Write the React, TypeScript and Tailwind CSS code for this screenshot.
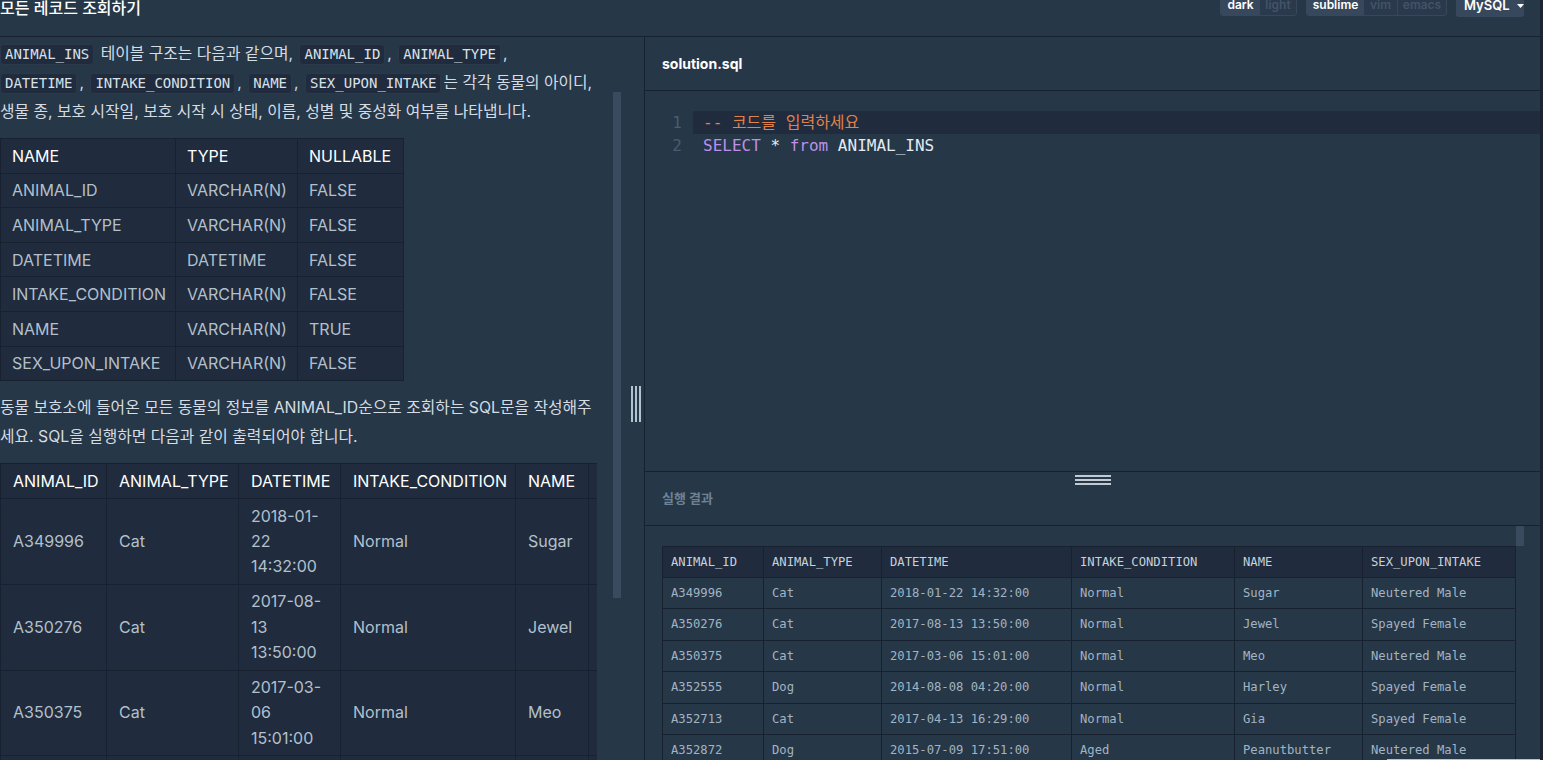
import React from "react";

const sans = "font-[Inter,'Noto_Sans_CJK_KR',sans-serif]";
const monoCls = "font-['DejaVu_Sans_Mono','Noto_Sans_CJK_KR',monospace]";

function Code({ children, first }: { children: React.ReactNode; first?: boolean }) {
  return (
    <code
      className={`${first ? "mr-[2px]" : "mx-[2px]"} inline-block h-[21px] rounded-[4px] border border-[#2b394b] bg-[#202b3d] px-[4px] align-middle text-[14px] leading-[19px] text-[#d9e1e8] font-['DejaVu_Sans_Mono',monospace]`}
    >
      {children}
    </code>
  );
}

const schema = [
  ["NAME", "TYPE", "NULLABLE"],
  ["ANIMAL_ID", "VARCHAR(N)", "FALSE"],
  ["ANIMAL_TYPE", "VARCHAR(N)", "FALSE"],
  ["DATETIME", "DATETIME", "FALSE"],
  ["INTAKE_CONDITION", "VARCHAR(N)", "FALSE"],
  ["NAME", "VARCHAR(N)", "TRUE"],
  ["SEX_UPON_INTAKE", "VARCHAR(N)", "FALSE"],
];
const schemaW = ["w-[175px]", "w-[122px]", "w-[106px]"];

const sampleHead = ["ANIMAL_ID", "ANIMAL_TYPE", "DATETIME", "INTAKE_CONDITION", "NAME", "SEX_UPON_INTAKE"];
const sampleRows = [
  ["A349996", "Cat", ["2018-01-", "22", "14:32:00"], "Normal", "Sugar", "Neutered Male"],
  ["A350276", "Cat", ["2017-08-", "13", "13:50:00"], "Normal", "Jewel", "Spayed Female"],
  ["A350375", "Cat", ["2017-03-", "06", "15:01:00"], "Normal", "Meo", "Neutered Male"],
  ["A352555", "Dog", ["2014-08-", "08", "04:20:00"], "Normal", "Harley", "Spayed Female"],
] as const;
const sampleW = ["w-[106px]", "w-[132px]", "w-[102px]", "w-[175px]", "w-[73px]", "w-[170px]"];

const results = [
  ["A349996", "Cat", "2018-01-22 14:32:00", "Normal", "Sugar", "Neutered Male"],
  ["A350276", "Cat", "2017-08-13 13:50:00", "Normal", "Jewel", "Spayed Female"],
  ["A350375", "Cat", "2017-03-06 15:01:00", "Normal", "Meo", "Neutered Male"],
  ["A352555", "Dog", "2014-08-08 04:20:00", "Normal", "Harley", "Spayed Female"],
  ["A352713", "Cat", "2017-04-13 16:29:00", "Normal", "Gia", "Spayed Female"],
  ["A352872", "Dog", "2015-07-09 17:51:00", "Aged", "Peanutbutter", "Neutered Male"],
  ["A353259", "Dog", "2016-05-08 12:57:00", "Injured", "Bj", "Neutered Male"],
];
const resW = ["w-[101px]", "w-[118px]", "w-[190px]", "w-[163px]", "w-[128px]", "w-[153px]"];

function Header() {
  return (
    <header className="flex h-[37px] shrink-0 items-start justify-between border-b border-[#172130]">
      <div className="text-[16px] font-medium leading-[17px] text-white">모든 레코드 조회하기</div>
      <div className="-mt-[6px] flex items-start gap-[9px] pr-[16px] text-[12px] font-semibold">
        <div className="flex h-[22px] overflow-hidden rounded-[3px] border border-[#38485c] bg-[#2a394b]">
          <span className="flex w-[39px] items-center justify-center bg-[#38485c] text-white">dark</span>
          <span className="flex w-[36px] items-center justify-center text-[#425468]">light</span>
        </div>
        <div className="flex h-[22px] overflow-hidden rounded-[3px] border border-[#38485c] bg-[#2a394b]">
          <span className="flex w-[57px] items-center justify-center bg-[#38485c] text-white">sublime</span>
          <span className="flex w-[33px] items-center justify-center text-[#425468]">vim</span>
          <span className="flex w-[49px] items-center justify-center border-l border-[#38485c] text-[#425468]">emacs</span>
        </div>
        <div className="flex h-[23px] w-[68px] items-center gap-[7px] rounded-[3px] bg-[#38485c] pl-[8px] text-[13px] text-white">
          <span>MySQL</span>
          <svg width="7" height="4" viewBox="0 0 7 4">
            <path d="M0 0 L7 0 L3.5 4 Z" fill="#ffffff" />
          </svg>
        </div>
      </div>
    </header>
  );
}

function LeftPane() {
  return (
    <div className="flex w-[645px] shrink-0 overflow-hidden border-r border-[#172130]">
      <div className="w-[597px] shrink-0 overflow-hidden">
        <div className="mt-[2px] text-[15.8px] leading-[29px] text-[#d5dce3]">
          <div className="whitespace-nowrap">
            <Code first>ANIMAL_INS</Code> 테이블 구조는 다음과 같으며, <Code>ANIMAL_ID</Code>, <Code>ANIMAL_TYPE</Code>,
          </div>
          <div className="whitespace-nowrap">
            <Code first>DATETIME</Code>, <Code>INTAKE_CONDITION</Code>, <Code>NAME</Code>, <Code>SEX_UPON_INTAKE</Code>는 각각 동물의 아이디,
          </div>
          <div className="whitespace-nowrap">생물 종, 보호 시작일, 보호 시작 시 상태, 이름, 성별 및 중성화 여부를 나타냅니다.</div>
        </div>

        <div className="mt-[12px] w-[404px] border-l border-t border-[#172130] bg-[#202b3d] text-[16px]">
          {schema.map((r, i) => (
            <div key={i} className="flex h-[34.6px]">
              {r.map((c, j) => (
                <div
                  key={j}
                  className={`${schemaW[j]} flex shrink-0 items-center border-b border-r border-[#172130] px-[11px] ${i === 0 ? "text-white" : "text-[#b2c0cc]"}`}
                >
                  {c}
                </div>
              ))}
            </div>
          ))}
        </div>

        <div className="mt-[12px] text-[15.8px] leading-[29px] text-[#d5dce3]">
          <div className="whitespace-nowrap">동물 보호소에 들어온 모든 동물의 정보를 ANIMAL_ID순으로 조회하는 SQL문을 작성해주</div>
          <div className="whitespace-nowrap">세요. SQL을 실행하면 다음과 같이 출력되어야 합니다.</div>
        </div>

        <div className="mt-[12px] w-[900px] border-l border-t border-[#172130] bg-[#202b3d] text-[16px]">
          <div className="flex h-[35px]">
            {sampleHead.map((c, j) => (
              <div key={j} className={`${sampleW[j]} flex shrink-0 items-center border-b border-r border-[#172130] px-[12px] text-white`}>
                {c}
              </div>
            ))}
          </div>
          {sampleRows.map((r, i) => (
            <div key={i} className="flex h-[85.7px]">
              {r.map((c, j) => (
                <div
                  key={j}
                  className={`${sampleW[j]} flex shrink-0 items-center border-b border-r border-[#172130] px-[12px] leading-[25.3px] text-[#b2c0cc]`}
                >
                  {Array.isArray(c) ? (
                    <div>
                      {c.map((l, k) => (
                        <div key={k}>{l}</div>
                      ))}
                    </div>
                  ) : (
                    c
                  )}
                </div>
              ))}
            </div>
          ))}
        </div>
      </div>
      <div className="ml-[16px] mt-[55px] h-[506px] w-[8px] shrink-0 bg-[#3a4a5f]" />
      <div className="ml-[10px] mt-[349px] flex h-[36px] shrink-0 gap-[2px]">
        <div className="h-full w-[2px] bg-[#b4c2cd]" />
        <div className="h-full w-[2px] bg-[#b4c2cd]" />
        <div className="h-full w-[2px] bg-[#b4c2cd]" />
      </div>
    </div>
  );
}

function RightPane() {
  return (
    <div className="flex min-w-0 flex-1 flex-col">
      <div className="flex h-[54px] shrink-0 items-center border-b border-[#172130] pl-[17px] text-[14px] font-bold text-white">
        solution.sql
      </div>
      <div className={`h-[381px] shrink-0 border-b border-[#172130] pt-[20px] text-[16px] leading-[23px] ${monoCls}`}>
        <div className="flex h-[23px]">
          <div className="w-[48px] shrink-0 pr-[11px] text-right text-[#4b5c70]">1</div>
          <div className="flex-1 whitespace-pre bg-[#202b3d] pl-[10px] text-[#e0824c]">-- 코드를 입력하세요</div>
        </div>
        <div className="flex h-[23px]">
          <div className="w-[48px] shrink-0 pr-[11px] text-right text-[#4b5c70]">2</div>
          <div className="flex-1 whitespace-pre pl-[10px] text-[#e3ebf2]">
            <span className="text-[#bb90ea]">SELECT</span> * <span className="text-[#bb90ea]">from</span> ANIMAL_INS
          </div>
        </div>
      </div>
      <div className="relative flex h-[54px] shrink-0 items-center border-b border-[#172130] pl-[17px] text-[13px] font-bold text-[#6f8295]">
        실행 결과
        <div className="absolute left-[430px] top-[3px] flex w-[36px] flex-col gap-[2px]">
          <div className="h-[2px] w-full bg-[#c2cbd3]" />
          <div className="h-[2px] w-full bg-[#c2cbd3]" />
          <div className="h-[2px] w-full bg-[#c2cbd3]" />
        </div>
      </div>
      <div className="relative min-h-0 flex-1 overflow-hidden pl-[17px] pt-[20px]">
        <div className="absolute right-[16px] top-0 h-[20px] w-[8px] bg-[#3a4a5f]" />
        <div className={`w-[854px] border-l border-t border-[#172130] text-[12.2px] ${monoCls}`}>
          <div className="flex h-[31px] bg-[#202b3d]">
            {sampleHead.map((c, j) => (
              <div key={j} className={`${resW[j]} flex shrink-0 items-center border-b border-r border-[#172130] pl-[8px] text-[#c6d1db]`}>
                {c}
              </div>
            ))}
          </div>
          {results.map((r, i) => (
            <div key={i} className="flex h-[31.4px]">
              {r.map((c, j) => (
                <div key={j} className={`${resW[j]} flex shrink-0 items-center border-b border-r border-[#172130] pl-[8px] text-[#a2b4c4]`}>
                  {c}
                </div>
              ))}
            </div>
          ))}
        </div>
        <div className="absolute bottom-0 left-[742px] right-0 h-[1px] bg-[#b8c2cb]" />
      </div>
    </div>
  );
}

export default function App() {
  return (
    <div className={`flex h-[760px] w-[1543px] overflow-hidden bg-[#263747] ${sans}`}>
      <div className="flex w-[1540px] shrink-0 flex-col">
        <Header />
        <div className="flex min-h-0 flex-1">
          <LeftPane />
          <RightPane />
        </div>
      </div>
      <div className="w-[3px] shrink-0 bg-[#1b2430]" />
    </div>
  );
}
